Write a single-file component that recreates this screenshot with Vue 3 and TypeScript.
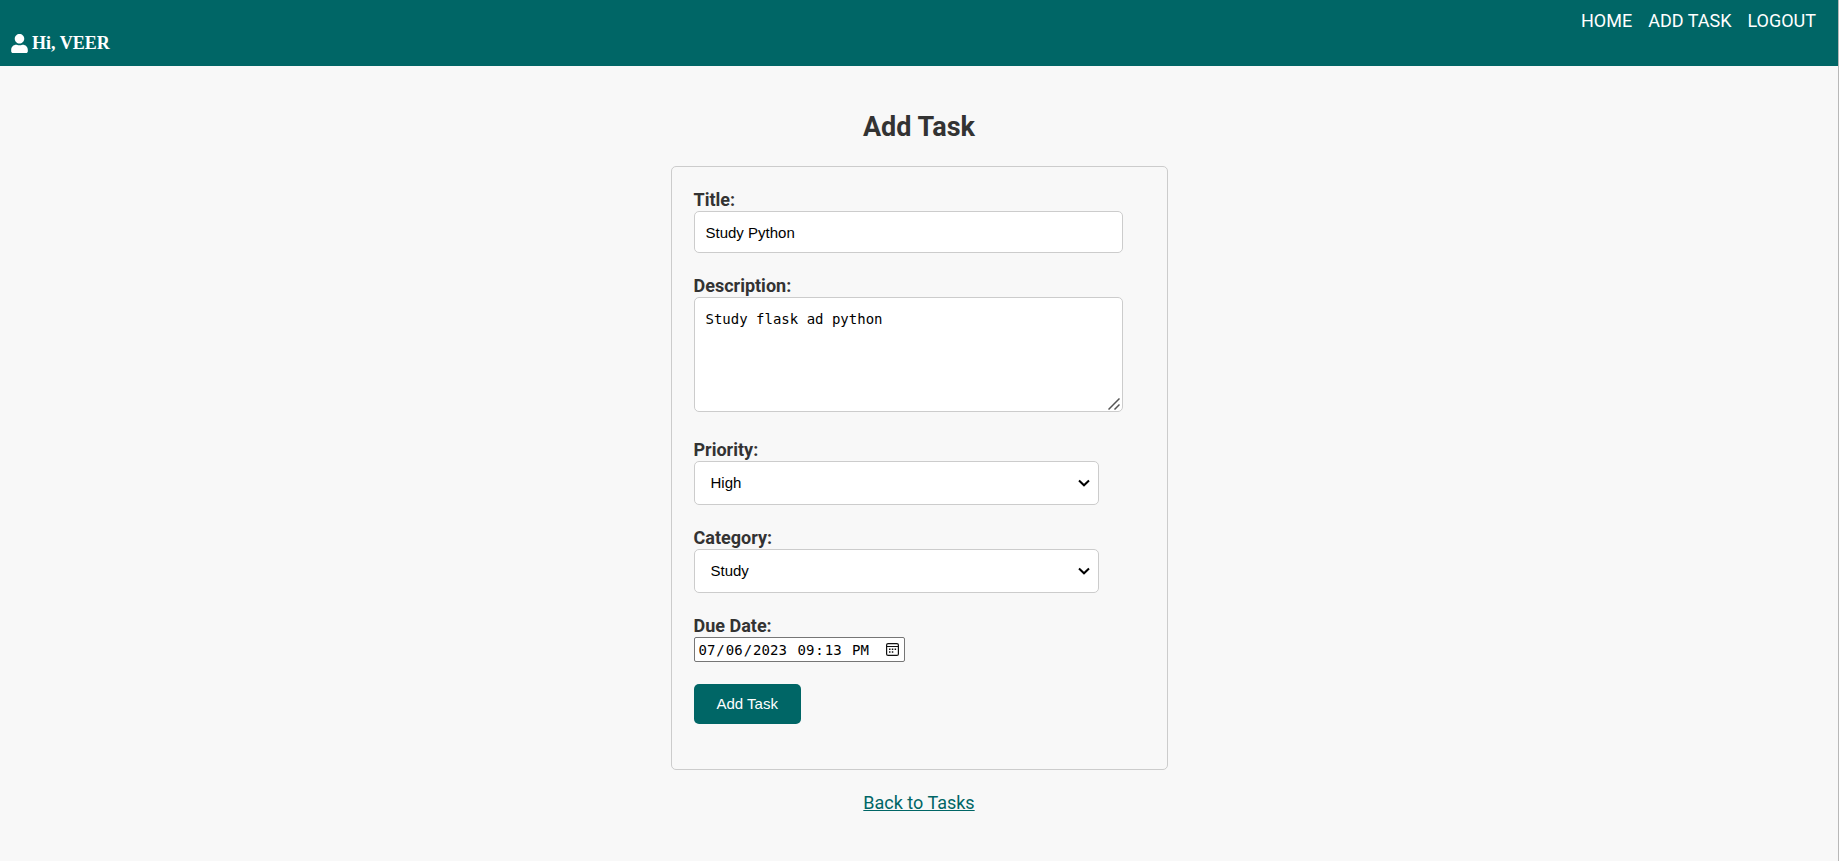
<script setup lang="ts">
import { reactive } from 'vue'

interface Task {
  title: string
  description: string
  priority: string
  category: string
  dueDate: string
  dueTime: string
}

const links: string[] = ['HOME', 'ADD TASK', 'LOGOUT']
const priorities: string[] = ['High', 'Medium', 'Low']
const categories: string[] = ['Study', 'Work', 'Personal']

const task = reactive<Task>({
  title: 'Study Python',
  description: 'Study flask ad python',
  priority: 'High',
  category: 'Study',
  dueDate: '2023-07-06',
  dueTime: '21:13',
})
</script>

<template>
  <div class="page">
    <header class="topbar">
      <div class="user">
        <svg class="user-icon" viewBox="0 0 448 512" aria-hidden="true">
          <path
            fill="currentColor"
            d="M224 256c70.700 0 128-57.300 128-128S294.700 0 224 0 96 57.300 96 128s57.300 128 128 128zm89.600 32h-16.700c-22.200 10.200-46.900 16-72.900 16s-50.600-5.800-72.900-16h-16.700C60.200 288 0 348.200 0 422.400V464c0 26.500 21.500 48 48 48h352c26.500 0 48-21.500 48-48v-41.600c0-74.200-60.200-134.400-134.400-134.400z"
          />
        </svg>
        <span>Hi, VEER</span>
      </div>
      <nav class="nav">
        <a v-for="link in links" :key="link" href="#">{{ link }}</a>
      </nav>
    </header>

    <main class="content">
      <h1>Add Task</h1>

      <form class="card" @submit.prevent>
        <div class="field">
          <label for="title">Title:</label>
          <input id="title" v-model="task.title" class="box wide text" type="text" />
        </div>

        <div class="field">
          <label for="description">Description:</label>
          <div class="area wide">
            <textarea id="description" v-model="task.description" class="box"></textarea>
            <svg class="grip" viewBox="0 0 12 12" aria-hidden="true">
              <path d="M0.500 11.500 11.500 0.500M6.500 11.500 11.500 6.500" fill="none" stroke="#555" stroke-width="1.500" />
            </svg>
          </div>
        </div>

        <div class="field after-area">
          <label for="priority">Priority:</label>
          <div class="select">
            <select id="priority" v-model="task.priority" class="box">
              <option v-for="p in priorities" :key="p">{{ p }}</option>
            </select>
            <svg class="chevron" viewBox="0 0 12 8" aria-hidden="true">
              <path d="M1 1.500 6 6.300 11 1.500" fill="none" stroke="#000" stroke-width="2" />
            </svg>
          </div>
        </div>

        <div class="field">
          <label for="category">Category:</label>
          <div class="select">
            <select id="category" v-model="task.category" class="box">
              <option v-for="c in categories" :key="c">{{ c }}</option>
            </select>
            <svg class="chevron" viewBox="0 0 12 8" aria-hidden="true">
              <path d="M1 1.500 6 6.300 11 1.500" fill="none" stroke="#000" stroke-width="2" />
            </svg>
          </div>
        </div>

        <div class="field">
          <label for="due">Due Date:</label>
          <div class="due">
            <input id="due" v-model="task.dueDate" class="due-date" type="date" />
            <input v-model="task.dueTime" class="due-time" type="time" aria-label="Due time" />
            <button class="picker" type="button" aria-label="Show date picker">
              <svg viewBox="0 0 13 13" aria-hidden="true">
                <rect x="0.600" y="0.600" width="11.800" height="11.800" rx="1.500" fill="none" stroke="#111" stroke-width="1.200" />
                <path d="M1 3.500H12" stroke="#111" stroke-width="1" />
                <path
                  d="M3 5.500h1.500V7H3zM5.800 5.500h1.500V7H5.800zM8.600 5.500h1.500V7H8.600zM3 8.300h1.500v1.500H3zM5.800 8.300h1.500v1.500H5.800z"
                  fill="#111"
                />
              </svg>
            </button>
          </div>
        </div>

        <button class="submit" type="submit">Add Task</button>
      </form>

      <a class="back" href="#">Back to Tasks</a>
    </main>
  </div>
</template>

<style>
body {
  margin: 0;
  background: #f8f8f8;
}
</style>

<style scoped>
.page {
  box-sizing: border-box;
  min-height: 100vh;
  border-right: 1px solid #b8b8b8;
  background: #f8f8f8;
  color: #333;
  font-family: Roboto, sans-serif;
  font-size: 18px;
  line-height: 22px;
}

.topbar {
  display: flex;
  justify-content: space-between;
  align-items: flex-start;
  box-sizing: border-box;
  min-height: 66px;
  padding: 10px 22px 12px 11px;
  background: #006666;
  color: #fff;
}

.user {
  display: flex;
  align-self: flex-end;
  align-items: center;
  gap: 4px;
  font-family: "Liberation Serif", serif;
  font-weight: 700;
}

.user-icon {
  width: 17px;
  height: 19px;
}

.nav {
  display: flex;
  gap: 16px;
}

.nav a {
  color: inherit;
  text-decoration: none;
}

.content {
  display: flex;
  flex-direction: column;
  align-items: center;
  padding: 45px 20px;
}

h1 {
  margin: 0 0 23px;
  font-size: 27px;
  line-height: 32px;
  font-weight: 700;
}

.card {
  box-sizing: border-box;
  width: 100%;
  max-width: 497px;
  padding: 22px 22px 45px;
  border: 1px solid #ccc;
  border-radius: 5px;
}

.field {
  display: flex;
  flex-direction: column;
  align-items: flex-start;
  margin-bottom: 22px;
}

.after-area {
  margin-top: 27px;
}

label {
  font-weight: 700;
}

.box {
  box-sizing: border-box;
  display: block;
  width: 100%;
  margin: 0;
  border: 1px solid #ccc;
  border-radius: 5px;
  background: #fff;
  color: #000;
}

.wide {
  width: calc(90% + 24px);
}

.text {
  height: 42px;
  padding: 0 11px;
  font: 15px/20px "Liberation Sans", Arial, sans-serif;
}

.area {
  position: relative;
}

textarea {
  height: 115px;
  padding: 11px;
  resize: none;
  font: 14px/20px "DejaVu Sans Mono", monospace;
}

.grip {
  position: absolute;
  right: 3px;
  bottom: 2px;
  width: 12px;
  height: 12px;
}

.select {
  position: relative;
  width: 90%;
}

select {
  height: 44px;
  padding: 0 16px;
  appearance: none;
  font: 15px/20px "Liberation Sans", Arial, sans-serif;
}

.chevron {
  position: absolute;
  top: 18px;
  right: 9px;
  width: 12px;
  height: 8px;
  pointer-events: none;
}

.due {
  display: flex;
  align-items: center;
  gap: 8px;
  box-sizing: border-box;
  width: 211px;
  height: 25px;
  padding: 0 5px 0 3px;
  border: 1px solid #767676;
  border-radius: 2px;
  background: #fff;
}

.due input {
  box-sizing: border-box;
  margin: 0;
  padding: 0;
  border: 0;
  background: transparent;
  color: #000;
  font: 14px/20px "DejaVu Sans Mono", monospace;
}

.due .due-date {
  width: 91px;
}

.due .due-time {
  width: 76px;
}

.due input::-webkit-calendar-picker-indicator {
  display: none;
}

.picker {
  display: flex;
  margin-left: auto;
  padding: 0;
  border: 0;
  background: none;
}

.picker svg {
  width: 13px;
  height: 13px;
}

.submit {
  display: block;
  height: 40px;
  padding: 0 23px;
  border: 0;
  border-radius: 5px;
  background: #006666;
  color: #fff;
  font: 15px/20px "Liberation Sans", Arial, sans-serif;
}

.back {
  margin-top: 22px;
  color: #006666;
}
</style>
